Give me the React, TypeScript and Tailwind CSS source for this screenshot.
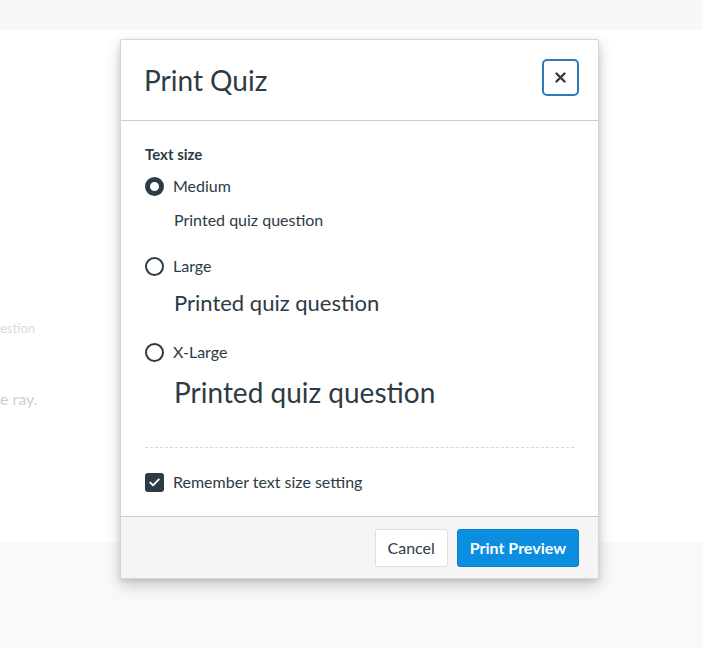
import React from 'react';

const font = { fontFamily: 'Lato, "Noto Sans", sans-serif' };

const Radio: React.FC<{ checked?: boolean; label: string }> = ({ checked, label }) => (
  <label className="flex items-center gap-[9px] text-[16px] leading-[22px] text-[#2d3b45]">
    <span
      className={
        checked
          ? 'w-[19px] h-[19px] rounded-full border-[5px] border-[#2d3b45] bg-white'
          : 'w-[19px] h-[19px] rounded-full border-2 border-[#2d3b45] bg-white'
      }
    />
    {label}
  </label>
);

const App: React.FC = () => (
  <div className="relative w-[703px] h-[648px] overflow-hidden bg-[#fafafa]" style={font}>
    {/* Page behind the overlay */}
    <div className="flex flex-col h-full">
      <div className="h-[30px] bg-[#f8f8f8]"></div>
      <div className="h-[512px] bg-white flex flex-col">
        <div className="mt-[290px] text-[13px] leading-[16px] text-[#dcdcdc]">estion</div>
        <div className="mt-[52px] text-[16px] leading-[22px] text-[#cfcfcf]">e ray.</div>
      </div>
      <div className="flex-1 bg-[#f9f9f9]"></div>
    </div>

    {/* Modal */}
    <div className="absolute left-[120px] top-[39px] w-[479px] bg-white border border-[#d6d6d6] rounded-[2px] shadow-[0_6px_16px_rgba(0,0,0,0.2),0_2px_5px_rgba(0,0,0,0.1)] flex flex-col">
      <div className="h-[81px] flex items-center justify-between pl-[23px] pr-[19px] border-b border-[#c7cdd1]">
        <h1 className="text-[28px] font-normal text-[#2d3b45] leading-none">Print Quiz</h1>
        <button className="mb-[5px] w-[37px] h-[37px] rounded-[5px] border-2 border-[#2a7cbf] flex items-center justify-center">
          <svg width="11" height="11" viewBox="0 0 11 11">
            <path d="M1.5 1.5l8 8M9.5 1.5l-8 8" stroke="#2d3b45" strokeWidth="2.4" strokeLinecap="round" />
          </svg>
        </button>
      </div>

      <div className="px-[24px] pt-[23px] pb-[23px] flex flex-col">
        <div className="text-[15px] font-bold text-[#2d3b45] leading-[20px]">Text size</div>
        <div className="mt-[11px]">
          <Radio checked label="Medium" />
        </div>
        <div className="ml-[29px] mt-[12px] text-[16px] leading-[22px] text-[#2d3b45]">Printed quiz question</div>
        <div className="mt-[24px]">
          <Radio label="Large" />
        </div>
        <div className="ml-[29px] mt-[11px] text-[22px] text-[#2d3b45] leading-[30px]">Printed quiz question</div>
        <div className="mt-[23px]">
          <Radio label="X-Large" />
        </div>
        <div className="ml-[29px] mt-[9px] text-[28px] text-[#2d3b45] leading-[40px]">Printed quiz question</div>
        <div className="mt-[35px] border-t border-dashed border-[#d5d9dc]"></div>
        <label className="mt-[23px] flex items-center gap-[9px] text-[16px] leading-[22px] text-[#2d3b45]">
          <span className="w-[19px] h-[19px] rounded-[3px] bg-[#2d3b45] flex items-center justify-center">
            <svg width="11" height="9" viewBox="0 0 11 9">
              <path d="M1.3 4.6l2.8 2.7L9.8 1.4" stroke="#fff" strokeWidth="1.9" fill="none" strokeLinecap="round" strokeLinejoin="round" />
            </svg>
          </span>
          Remember text size setting
        </label>
      </div>

      <div className="h-[62px] bg-[#f5f5f5] border-t border-[#c7cdd1] flex items-center justify-end gap-[9px] pr-[19px]">
        <button className="h-[38px] px-[12px] bg-white border border-[#e0e0e0] rounded-[3px] text-[16px] text-[#2d3b45]">
          Cancel
        </button>
        <button className="h-[38px] px-[12px] bg-[#0b8de0] border border-[#0a80cc] rounded-[3px] text-[16px] font-bold text-white">
          Print Preview
        </button>
      </div>
    </div>
  </div>
);

export default App;
